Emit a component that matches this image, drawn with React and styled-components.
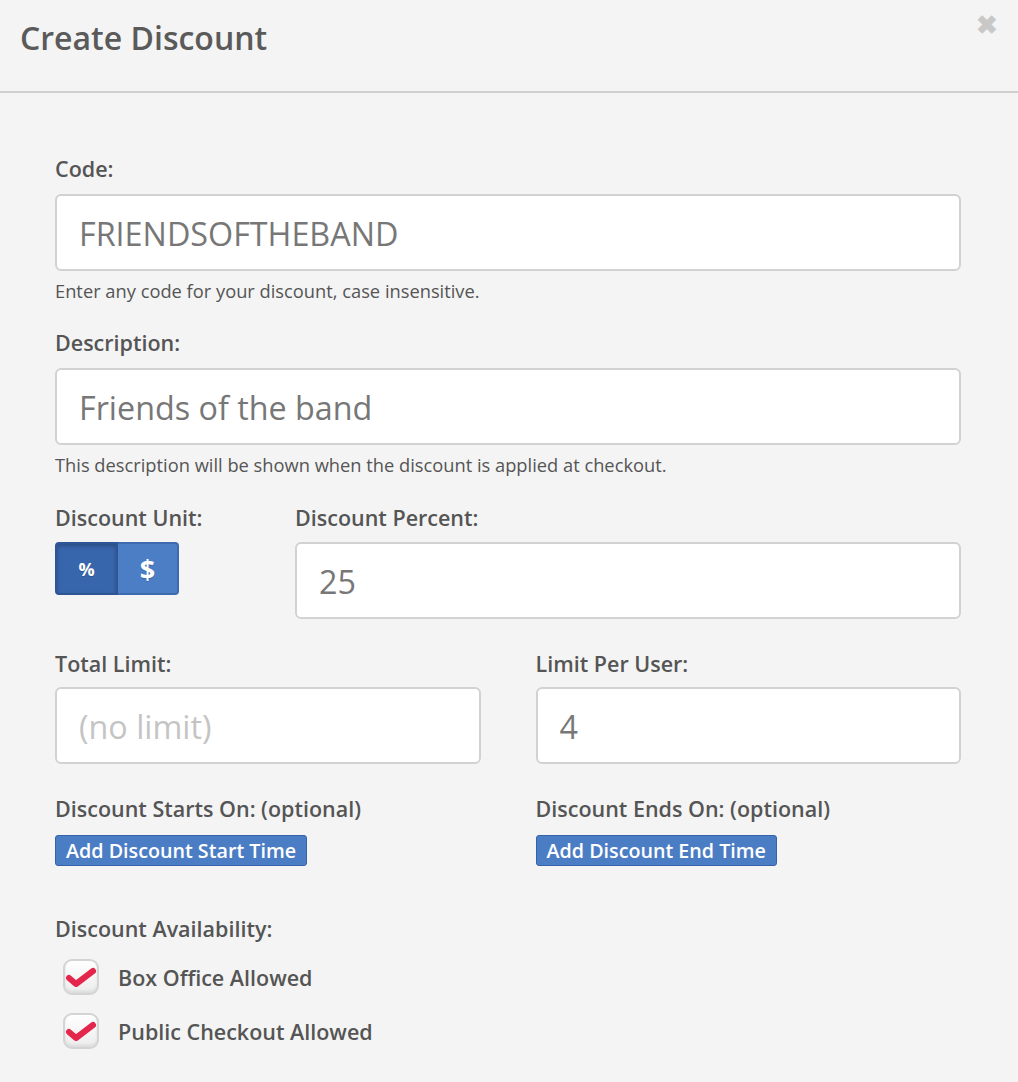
import React, { useState } from "react";
import styled, { createGlobalStyle } from "styled-components";

const GlobalStyle = createGlobalStyle`
  html, body {
    margin: 0;
    padding: 0;
    background: #f4f4f4;
    font-family: "Open Sans", "Noto Sans", sans-serif;
    color: #555;
  }
  * { box-sizing: border-box; }
`;

const Modal = styled.div`
  width: 1018px;
  min-height: 1082px;
  background: #f4f4f4;
`;

const Header = styled.div`
  position: relative;
  height: 93px;
  padding: 15px 20px 0;
  border-bottom: 2px solid #cfcfcf;
`;

const Title = styled.h1`
  margin: 0;
  font-size: 32px;
  font-weight: 600;
  line-height: 46px;
  color: #5a5a5a;
`;

const Close = styled.button`
  position: absolute;
  top: 12px;
  right: 20px;
  border: 0;
  background: none;
  padding: 0;
  font-size: 26px;
  font-weight: 700;
  line-height: 1;
  color: #c8c8c8;
  cursor: pointer;
`;

const Body = styled.div`
  padding: 61px 57px 30px 55px;
  display: flex;
  flex-direction: column;
`;

const Field = styled.div`
  display: flex;
  flex-direction: column;
  margin-bottom: ${(p) => p.gap || "0px"};
`;

const Label = styled.label`
  font-size: 21.5px;
  font-weight: 600;
  color: #555;
  line-height: 30px;
  margin-bottom: ${(p) => p.mb || "10px"};
`;

const Input = styled.input`
  width: 100%;
  height: 77px;
  border: 2px solid #d2d2d2;
  border-radius: 6px;
  background: #fff;
  padding: 0 22px;
  font-family: "Open Sans", sans-serif;
  font-size: 32.3px;
  color: #777;
  outline: none;
  &::placeholder {
    color: #c4c4c4;
  }
`;

const Help = styled.div`
  font-size: 18.3px;
  color: #555;
  line-height: 24px;
  margin-top: 8px;
`;

const Row = styled.div`
  display: grid;
  grid-template-columns: ${(p) => p.cols};
  column-gap: ${(p) => p.gap};
  margin-bottom: ${(p) => p.mb || "0px"};
`;

const Toggle = styled.div`
  display: flex;
  width: 124px;
  height: 53px;
`;

const ToggleBtn = styled.button`
  flex: 1;
  border: 2px solid ${(p) => (p.active ? "#2e5596" : "#3e6bb0")};
  background: ${(p) => (p.active ? "#3866ad" : "#4c7ec6")};
  color: #fff;
  font-family: "Open Sans", sans-serif;
  font-weight: 700;
  font-size: ${(p) => (p.active ? "18px" : "27px")};
  padding: 0;
  cursor: pointer;
  border-radius: ${(p) => (p.side === "left" ? "4px 0 0 4px" : "0 4px 4px 0")};
  box-shadow: ${(p) => (p.active ? "inset 0 2px 4px rgba(0,0,0,0.25)" : "none")};
  text-shadow: 0 1px 1px rgba(0, 0, 0, 0.2);
  & + & {
    border-left: 0;
  }
`;

const SmallButton = styled.button`
  align-self: flex-start;
  height: 31px;
  padding: 0 10px;
  border: 1px solid #3562a8;
  border-radius: 3px;
  background: #4b7dc5;
  color: #fff;
  font-family: "Open Sans", sans-serif;
  font-size: 19.7px;
  font-weight: 600;
  line-height: 29px;
  cursor: pointer;
`;

const CheckRow = styled.label`
  display: flex;
  align-items: center;
  gap: 19px;
  padding-left: 8px;
  height: 36px;
  margin-top: ${(p) => p.mt};
  font-size: 21.5px;
  font-weight: 600;
  color: #555;
  cursor: pointer;
`;

const CheckBox = styled.span`
  position: relative;
  width: 36px;
  height: 36px;
  border: 2px solid #d4d4d4;
  border-radius: 9px;
  background: linear-gradient(#ffffff, #ececec);
  box-shadow: inset 0 -2px 3px rgba(0, 0, 0, 0.08);
  & svg {
    position: absolute;
    left: 0px;
    top: 4px;
  }
`;

const CheckMark = () => (
  <svg width="32" height="24" viewBox="0 0 32 24">
    <path
      d="M4 13 L11 19 L28 6"
      fill="none"
      stroke="#e5264c"
      strokeWidth="6"
      strokeLinecap="round"
      strokeLinejoin="round"
    />
  </svg>
);

const App = () => {
  const [unit, setUnit] = useState("%");
  const [boxOffice, setBoxOffice] = useState(true);
  const [publicCheckout, setPublicCheckout] = useState(true);

  return (
    <Modal>
      <GlobalStyle />
      <Header>
        <Title>Create Discount</Title>
        <Close>&#x2716;</Close>
      </Header>
      <Body>
        <Field gap="25px">
          <Label>Code:</Label>
          <Input defaultValue="FRIENDSOFTHEBAND" />
          <Help>Enter any code for your discount, case insensitive.</Help>
        </Field>
        <Field gap="26px">
          <Label>Description:</Label>
          <Input defaultValue="Friends of the band" />
          <Help>This description will be shown when the discount is applied at checkout.</Help>
        </Field>
        <Row cols="240px 1fr" gap="0px" mb="30px">
          <Field>
            <Label mb="9px">Discount Unit:</Label>
            <Toggle>
              <ToggleBtn side="left" active={unit === "%"} onClick={() => setUnit("%")}>
                %
              </ToggleBtn>
              <ToggleBtn side="right" active={unit === "$"} onClick={() => setUnit("$")}>
                $
              </ToggleBtn>
            </Toggle>
          </Field>
          <Field>
            <Label mb="9px">Discount Percent:</Label>
            <Input defaultValue="25" />
          </Field>
        </Row>
        <Row cols="1fr 1fr" gap="55px" mb="30px">
          <Field>
            <Label mb="8px">Total Limit:</Label>
            <Input placeholder="(no limit)" />
          </Field>
          <Field>
            <Label mb="8px">Limit Per User:</Label>
            <Input defaultValue="4" />
          </Field>
        </Row>
        <Row cols="1fr 1fr" gap="55px" mb="48px">
          <Field>
            <Label mb="11px">Discount Starts On: (optional)</Label>
            <SmallButton>Add Discount Start Time</SmallButton>
          </Field>
          <Field>
            <Label mb="11px">Discount Ends On: (optional)</Label>
            <SmallButton>Add Discount End Time</SmallButton>
          </Field>
        </Row>
        <Field>
          <Label mb="15px">Discount Availability:</Label>
          <CheckRow mt="0px" onClick={() => setBoxOffice(!boxOffice)}>
            <CheckBox>{boxOffice && <CheckMark />}</CheckBox>
            Box Office Allowed
          </CheckRow>
          <CheckRow mt="18px" onClick={() => setPublicCheckout(!publicCheckout)}>
            <CheckBox>{publicCheckout && <CheckMark />}</CheckBox>
            Public Checkout Allowed
          </CheckRow>
        </Field>
      </Body>
    </Modal>
  );
};

export default App;
